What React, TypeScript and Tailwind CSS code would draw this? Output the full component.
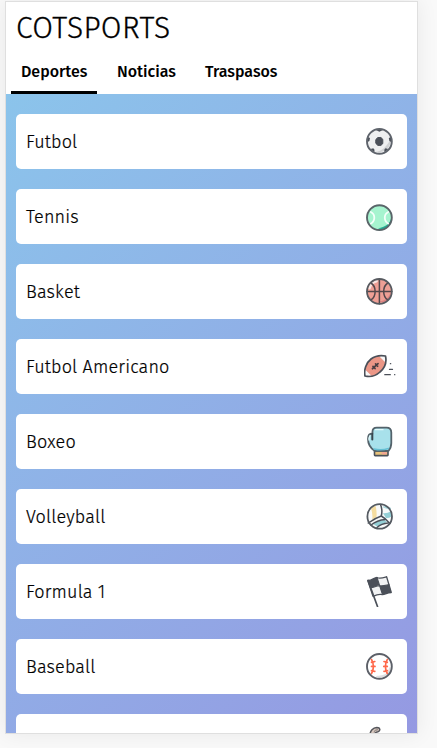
import type { ReactNode } from 'react';

const dark = '#4b5059';

function Icon({ children }: { children: ReactNode }) {
  return (
    <svg viewBox="0 0 32 32" className="size-8 shrink-0" fill="none" strokeLinecap="round" strokeLinejoin="round">
      {children}
    </svg>
  );
}

const Soccer = () => (
  <Icon>
    <circle cx="15.4" cy="16.4" r="12" fill="#eeeff0" />
    <path d="M27 13c1 9-7 16-16 14 7-1 12-5 16-14z" fill="#d0d2d4" />
    <path d="M11.500 4.800h7.800l-3.900 2zM3.800 12l2.200 1-.6 3-1.800 1zM27 12l-2.200 1 .6 3 1.800 1zM6.500 24l2.800-.8 1.200 1.600-.2 2.600zM24.300 24l-2.800-.8-1.200 1.600.2 2.600z" fill={dark} />
    <path d="M12 14.300l1.900-1.800h3l1.900 1.800v4.300l-1.900 1.800h-3l-1.900-1.800z" fill={dark} stroke={dark} strokeWidth="1" />
    <circle cx="15.4" cy="16.4" r="12.4" stroke="#5f646c" strokeWidth="1.9" />
  </Icon>
);

const Tennis = () => (
  <Icon>
    <circle cx="15.4" cy="17.6" r="12.2" fill="#a6f4cf" />
    <path d="M27.300 18c-1.500 6-6 9-13.300 10.300 5 2.600 14-1.300 13.300-10.300z" fill="#23aa91" />
    <path d="M6.800 12c5 2.500 4.500 9.500-.5 12M24.300 12c-5 2.500-4.500 9.500.5 12" stroke="#f4fffa" strokeWidth="1.800" />
    <circle cx="15.4" cy="17.6" r="12.4" stroke="#596569" strokeWidth="1.900" />
  </Icon>
);

const Basket = () => (
  <Icon>
    <circle cx="15.4" cy="16.4" r="12.2" fill="#ee9f95" />
    <path d="M26.500 17c-1 5-5 9-12 9.500 5 2 13-1 12-9.500z" fill="#d98080" />
    <path d="M5.500 13c1-4 4-6.500 7-7" stroke="#f9e5e1" strokeWidth="2.800" />
    <path d="M15.400 4v24.800M3 16.400h24.800M7 8c5.500 3.500 5.500 13.300 0 16.800M23.800 8c-5.500 3.500-5.500 13.300 0 16.800" stroke="#52474b" strokeWidth="1.500" />
    <circle cx="15.4" cy="16.4" r="12.4" stroke="#575a60" strokeWidth="1.8" />
  </Icon>
);

const AmericanFootball = () => (
  <Icon>
    <path d="M1 26C-.3 20 2 13 7 9c4-3 9-4 14.500-3 1.300 6-.6 12-5.500 16-4 3.700-9.500 5.300-15 4z" fill="#eb9686" />
    <path d="M1 19.500l6.500 6.300-6.500.2zM15 6l6.500 6.500V6z" fill="#f7f6f6" />
    <path d="M1 26C-.3 20 2 13 7 9c4-3 9-4 14.500-3 1.300 6-.6 12-5.500 16-4 3.700-9.500 5.300-15 4z" stroke={dark} strokeWidth="1.700" />
    <path d="M8.500 18.700l5.500-5M9 16.400l2 2.100M11.600 14l2 2.200" stroke="#493f43" strokeWidth="1.800" />
    <path d="M26.400 13.700h.3M25.500 19.400h3M20.800 24.700h5.500M30.600 24.700h.2" stroke={dark} strokeWidth="1.300" />
  </Icon>
);

const Boxing = () => (
  <Icon>
    <path d="M10.500 26h13.500v4q0 .6-.6.600H11.100q-.6 0-.6-.6z" fill="#e8c27b" stroke={dark} strokeWidth="1.600" />
    <path d="M18.500 28.200h3.500" stroke="#f4a296" strokeWidth="2" />
    <path d="M8.500 8.500V6.500q0-3.900 4.200-3.900h9.800q4.800 0 4.800 4.900v10.500c0 3-1 5.800-2.800 7.800h-14C6.500 23 4 19.500 4 14c0-3 1.200-5.500 4.500-5.500z" fill="#a8e1eb" stroke="#53626a" strokeWidth="1.800" />
    <path d="M10 24c5 1.300 10 1 14.500-.5" stroke="#65bfd3" strokeWidth="1.500" />
    <path d="M6 10.500q-1.300 2-1 4.500M11.500 4.700h7.500" stroke="#e3fafd" strokeWidth="1.300" />
    <path d="M8.300 9v5.500" stroke="#38464e" strokeWidth="2" />
  </Icon>
);

const Volleyball = () => (
  <Icon>
    <circle cx="15.7" cy="16.4" r="12.3" fill="#f9fafa" />
    <path d="M7 8l4.500-2.500q1.500 6 1 11.500l-4.300 2.500q.8-5-1.200-11.500z" fill="#f5dda0" />
    <path d="M19 13.200q4 .5 8.200-2l.5 5.300q-3 1.800-5.700 1.500zM9 24q5-3.500 11.500-4l2.500 1.800q-5 2.500-9 5.200z" fill="#94cfd6" />
    <path d="M16.500 4.500q2.300 5.500.8 11.500-6 2-13 7M17.300 16q4.500 2.500 8.500 7.500M7 25q6-4.800 14.500-5.500M13 27.500q4.500-4 11-4.500" stroke={dark} strokeWidth="1.500" />
    <path d="M20 7q3 1 6 1.500" stroke="#a9d9df" strokeWidth="1.800" />
    <circle cx="15.7" cy="16.4" r="12.3" stroke="#555b62" strokeWidth="1.8" />
  </Icon>
);

const RaceFlag = () => (
  <Icon>
    <path d="M3.800 5.500c4 .3 6-2.800 9.200-3 3 1.500 6 .3 9.600-.8L27.300 17.500c-4 0-6 1.700-8.800 2.200-3-1-6 0-9.500 1.600z" fill="#f1f2f3" stroke={dark} strokeWidth="1.300" />
    <path d="M3.800 5.500c4 .3 6-2.800 9.200-3l2.500 8c-3 0-5 2.200-9 2.200zM15.500 10.500c3 1.500 6-.5 9.500-1L27.300 17.500c-4 0-6 1.700-8.800 2.200z" fill={dark} />
    <path d="M4 5.500l9.500 26" stroke={dark} strokeWidth="1.700" />
    <path d="M13 2.500l5.500 17M6.500 12.700c4 0 5-2 9-2 4 .5 6-.4 9.500-1.200" stroke={dark} strokeWidth="1.100" />
  </Icon>
);

const Baseball = () => (
  <Icon>
    <circle cx="15.4" cy="16.4" r="12.3" fill="#fff" />
    <path d="M26 18c-1 6-6 9-13 8.500" stroke="#dedfe1" strokeWidth="1.700" />
    <path d="M7.500 9.500c2.500 3.500 2.500 10.300 0 14M23.300 9.500c-2.500 3.500-2.500 10.300 0 14M7.500 12.300l3.300-.8M7.500 16.400h3.500M7.500 20.600l3.300.7M23.300 12.300l-3.300-.8M23.300 16.400h-3.500M23.300 20.600l-3.300.7" stroke="#ff694b" strokeWidth="1.700" />
    <circle cx="15.4" cy="16.4" r="12.400" stroke="#5c6068" strokeWidth="1.900" />
  </Icon>
);

const Loop = () => (
  <Icon>
    <path d="M6 10c0-4 3-7.300 6.800-7.500 3.700 0 3.800 3.500 1.200 4.200-2.500.4-3.500 1-4 3.300" fill="#d8c8bf" stroke="#54555b" strokeWidth="1.500" />
    <path d="M10 6.500q1.500-2 3.500-1.800" stroke="#77716f" strokeWidth="1" />
  </Icon>
);

const sports = [
  { name: 'Futbol', icon: Soccer },
  { name: 'Tennis', icon: Tennis },
  { name: 'Basket', icon: Basket },
  { name: 'Futbol Americano', icon: AmericanFootball },
  { name: 'Boxeo', icon: Boxing },
  { name: 'Volleyball', icon: Volleyball },
  { name: 'Formula 1', icon: RaceFlag },
  { name: 'Baseball', icon: Baseball },
  { name: '', icon: Loop },
];

export default function App() {
  return (
    <div className="h-[748px] w-[437px] overflow-hidden bg-[#f9f9f9] pt-px pl-[5px] font-['Fira_Sans','Noto_Sans',sans-serif] text-black">
      <main className="flex h-[733px] w-[413px] flex-col overflow-hidden border border-[#dfdfdf] bg-white shadow-[0_0_20px_rgba(0,0,0,0.07)]">
        <header className="flex h-[92px] shrink-0 flex-col justify-between">
          <h1 className="pt-[6px] pl-[10px] text-[30px] leading-[40px] font-light tracking-[0.35px] [-webkit-text-stroke:0.3px_black]">COTSPORTS</h1>
          <nav className="flex gap-[10px] pl-[5px] text-[16px] leading-[20px] font-medium">
            <a className="h-[32px] w-[86px] border-b-[3px] border-black pl-[10px]">Deportes</a>
            <a className="h-[32px] w-[78px] pl-[10px]">Noticias</a>
            <a className="h-[32px] w-[92px] pl-[10px]">Traspasos</a>
          </nav>
        </header>
        <section className="flex min-h-0 flex-1 flex-col gap-5 overflow-hidden bg-[linear-gradient(135deg,#8bc4eb,#9599e2)] px-[10px] pt-5">
          {sports.map(({ name, icon: SportIcon }, index) => (
            <article key={index} className="flex h-[55px] shrink-0 items-start justify-between rounded-[5px] bg-white pt-[11px] pr-[11px] pl-[10px]">
              <span className="text-[18px] leading-[35px] font-light tracking-[0.17px] [-webkit-text-stroke:0.2px_black]">{name}</span>
              <SportIcon />
            </article>
          ))}
        </section>
      </main>
    </div>
  );
}
